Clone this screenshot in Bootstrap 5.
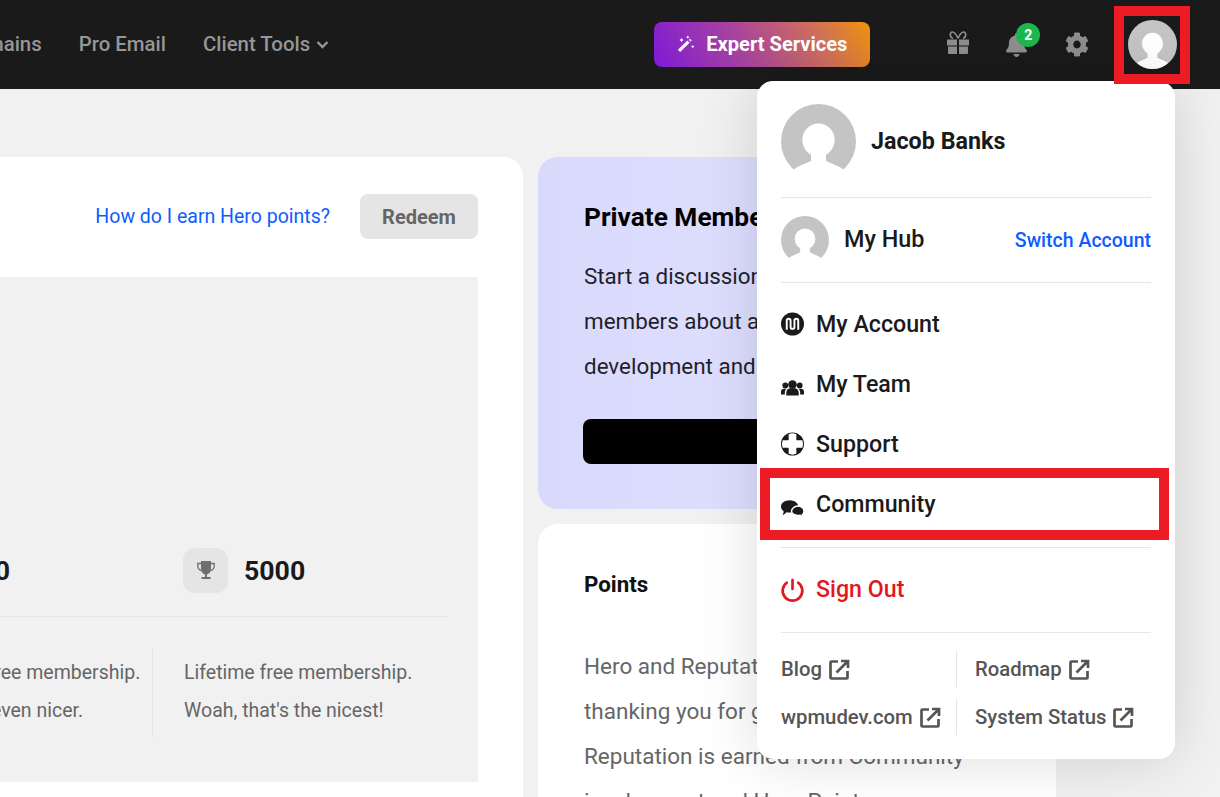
<!DOCTYPE html>
<html lang="en">
<head>
<meta charset="utf-8">
<title>Hub</title>
<link rel="stylesheet" href="https://cdn.jsdelivr.net/npm/bootstrap@5.3.0/dist/css/bootstrap.min.css">
<style>
html,body{height:100%;}
body{background:#f1f1f1;font-family:Roboto,"Liberation Sans",sans-serif;font-size:20px;color:#1a1a1a;overflow:hidden;}
.shell{position:relative;width:1220px;height:797px;overflow:hidden;}
.topbar{height:89px;background:#1a1a1a;padding:0;flex-wrap:nowrap;}
.topnav{margin-left:-39px;gap:37px;margin-bottom:1px;}
.topnav a{color:#969696;font-size:20.400px;font-weight:500;text-decoration:none;white-space:nowrap;padding:0;}
.topnav svg{width:13px;height:13px;margin-left:6px;vertical-align:0;}
.expert{width:216px;height:45px;margin-left:325px;border:0;border-radius:8px;color:#fff;font-size:20.100px;font-weight:700;background:linear-gradient(65deg,#7e1ad6 0%,#a9459b 42%,#cf6f5c 75%,#f0920d 100%);gap:11px;padding:0 0 1px 23px;}
.expert:hover{color:#fff;}
.expert svg{width:18px;height:18px;}
.ticon{fill:#8e8e8e;display:block;}
.gift{width:22px;height:23px;margin-left:77px;margin-bottom:4px;}
.bellbox{position:relative;width:21px;height:24px;margin-left:37px;}
.bellbox svg{width:21px;height:24px;}
.bellnum{position:absolute;left:10px;top:-10px;width:24px;height:24px;border-radius:50%;background:#1cb84f;color:#fff;font-size:14px;font-weight:700;padding:0;line-height:24px;}
.gear{width:24px;height:25px;margin-left:38px;margin-bottom:1px;}
.avtop{width:49px;height:49px;margin-left:39px;display:block;}
.stage{padding-top:68px;align-items:flex-start;}
.herocard{margin-left:-300px;width:823px;flex:none;height:800px;background:#fff;border-radius:20px;padding:37px 45px 0;}
.herohead{height:45px;margin-bottom:38px;gap:30px;}
.bluelink{color:#0d5cff;text-decoration:none;font-size:19.500px;}
.redeem{width:118px;height:45px;padding:0;border:0;border-radius:8px;background:#e5e5e5;color:#666;font-size:20px;font-weight:700;}
.greybox{height:505px;background:#f1f1f1;padding:271px 30px 0 114px;}
.statrow{height:69px;border-bottom:1px solid #e6e6e6;align-items:flex-start;}
.statcell{width:294px;gap:16px;align-items:flex-start;}
.statfirst{justify-content:flex-end;padding-right:143px;}
.statlast{padding-left:30px;}
.chip{width:45px;height:45px;border-radius:12px;background:#e5e5e5;}
.chip svg{width:18px;height:20px;fill:#6f6f6f;}
.statnum{font-size:26.700px;font-weight:700;color:#1a1a1a;line-height:47px;}
.descrow{margin-top:31px;}
.desc{width:294px;height:89px;padding-top:6px;font-size:19.500px;line-height:38px;color:#666;white-space:nowrap;}
.descfirst{border-right:1px solid #e6e6e6;padding-left:53px;}
.desclast{padding-left:31px;}
.rightcol{margin-left:15px;width:518px;flex:none;gap:15px;}
.forumcard{height:352px;border-radius:20px;background:linear-gradient(90deg,#d9d9fc,#e0e0ff 60%,#dcdcfd);padding:44px 46px 0;}
.forumcard h2{font-size:26.300px;font-weight:700;color:#000;line-height:32px;margin:0 0 21px;white-space:nowrap;}
.forumcard p{font-size:22.400px;line-height:45px;color:#1f1f2b;margin:0 0 30px;white-space:nowrap;}
.blackbtn{display:block;width:300px;height:45px;margin-left:-1px;background:#000;border:0;border-radius:8px;color:#000;}
.pointscard{height:320px;border-radius:20px;background:#fff;padding:45px 46px 0;}
.pointscard h3{font-size:22.300px;font-weight:700;color:#111;line-height:30px;margin:0 0 45px;}
.pointscard p{font-size:22.500px;line-height:45px;color:#666;margin:0;white-space:nowrap;}
.usermenu{position:absolute;left:757px;top:81px;width:418px;height:678px;margin:0;padding:0 24px;border:0;border-radius:16px;background:#fff;box-shadow:0 0 60px rgba(0,0,0,.14);font-size:22px;color:#1a1a1a;}
.whoami{height:116px;padding-top:23px;gap:15px;align-items:flex-start;}
.whoami svg{width:75px;height:75px;display:block;}
.whoami span{font-size:23.300px;font-weight:700;line-height:75px;}
.thinrule{margin:0;border:0;border-top:1px solid #e6e6e6;opacity:1;height:0;}
.hubline{height:84px;gap:15px;}
.hubline svg{width:48px;height:48px;}
.hubline .hubname{font-size:23.400px;font-weight:500;}
.hubline a{font-size:19.500px;font-weight:500;margin-left:auto;margin-top:1px;color:#0d5cff;text-decoration:none;}
.menulist{padding-top:11px;height:264px;}
.usermenu .dropdown-item{height:60px;padding:0;gap:12px;display:flex;align-items:center;font-size:23.200px;font-weight:500;color:#1a1a1a;background:none;}
.usermenu .dropdown-item svg{width:23px;height:24px;fill:#1a1a1a;flex:none;overflow:visible;}
.usermenu .signout{height:84px;padding-bottom:2px;color:#e3181f;}
.usermenu .signout svg{fill:none;stroke:#e3181f;stroke-width:2.800;stroke-linecap:round;}
.footlinks{padding-top:18px;row-gap:12px;flex-wrap:wrap;}
.footlinks a{height:36px;display:flex;align-items:center;gap:7px;font-size:20.300px;font-weight:500;color:#555;text-decoration:none;white-space:nowrap;}
.footlinks a:nth-child(odd){width:176px;border-right:1px solid #e6e6e6;}
.footlinks a:nth-child(even){padding-left:18px;width:194px;}
.footlinks svg{width:21px;height:21px;fill:none;stroke:#555;stroke-width:2.700;}
.redmark{position:absolute;z-index:1001;border:10px solid #ed1c24;pointer-events:none;}
.markavatar{left:1114px;top:6px;width:76px;height:78px;}
.markitem{left:760px;top:468px;width:409px;height:72px;}
</style>
</head>
<body>
<svg width="0" height="0" class="position-absolute">
<defs>
<clipPath id="avclip"><circle cx="50" cy="50" r="50"/></clipPath>
<mask id="avmask"><rect width="100" height="100" fill="#fff"/><path fill="#000" d="M40 76C34 80 22 82 14 90V101H86V90C78 82 66 80 60 76z"/></mask>
<symbol id="avatar" viewBox="0 0 100 100">
<circle cx="50" cy="50" r="50" fill="#c4c4c4" mask="url(#avmask)"/>
<g clip-path="url(#avclip)" fill="#fff">
<ellipse cx="50" cy="48" rx="21.500" ry="22"/>
<rect x="40" y="62" width="20" height="16"/>
<path d="M40 76C34 80 22 82 14 90V101H86V90C78 82 66 80 60 76z"/>
</g>
</symbol>
<symbol id="extlink" viewBox="0 0 21 21">
<path d="M9 2.500H2.500a1 1 0 0 0-1 1v15a1 1 0 0 0 1 1h15a1 1 0 0 0 1-1V12"/>
<path d="M7.500 13.500 18 3M12 2h7v7"/>
</symbol>
</defs>
</svg>
<div class="shell">
<nav class="navbar topbar d-flex align-items-center justify-content-start">
<div class="d-flex align-items-center topnav">
<a href="#">Domains</a>
<a href="#">Pro Email</a>
<a href="#">Client Tools<svg viewBox="0 0 13 13" fill="none" stroke="#969696" stroke-width="2.400"><path d="M1.500 4 6.500 9l5-5"/></svg></a>
</div>
<button class="btn expert d-flex align-items-center justify-content-start" type="button">
<svg viewBox="0 0 20 20" fill="#fff"><path d="M1 16.500 11.500 6l2.500 2.500L3.500 19z"/><path d="M13 5.500l1.500-1.500 2 2-1.500 1.500z" opacity=".8"/><path d="M5 3l.8 1.700 1.700.8-1.700.8L5 8l-.8-1.700-1.700-.8 1.700-.8zM12 .5l.6 1.300 1.300.6-1.300.6-.6 1.300-.6-1.300-1.300-.6 1.300-.6zM17.500 11l.6 1.300 1.300.6-1.300.6-.6 1.300-.6-1.300-1.300-.6 1.300-.6z"/></svg>
Expert Services</button>
<svg class="ticon gift" viewBox="0 0 22 23"><path d="M0 8.500h10v6H0zM12 8.500h10v6H12zM1 15.500h9V23H2a1 1 0 0 1-1-1zM12 15.500h9V22a1 1 0 0 1-1 1h-8z"/><path fill="none" stroke="#8e8e8e" stroke-width="1.700" d="M11 7.500C9 2.500 7 1 5.200 1 2.800 1 2.200 6.500 6 7.300M11 7.500c2-5 4-6.500 5.800-6.500 2.400 0 3 5.500-.8 6.300"/></svg>
<div class="bellbox">
<svg class="ticon" viewBox="0 0 448 512"><path d="M224 512c35.320 0 63.970-28.650 63.970-64H160.030c0 35.350 28.650 64 63.970 64zm215.390-149.710c-19.320-20.760-55.470-51.990-55.470-154.290 0-77.700-54.480-139.900-127.940-155.160V32c0-17.670-14.320-32-31.980-32s-31.980 14.330-31.980 32v20.840C118.560 68.100 64.080 130.300 64.080 208c0 102.300-36.150 133.530-55.470 154.290-6 6.450-8.660 14.160-8.610 21.710.11 16.400 12.980 32 32.100 32h383.800c19.120 0 32-15.600 32.100-32 .05-7.550-2.610-15.270-8.610-21.710z"/></svg>
<span class="badge bellnum">2</span>
</div>
<svg class="ticon gear" viewBox="0 0 512 512" preserveAspectRatio="none"><path d="M487.400 315.700l-42.600-24.600c4.300-23.200 4.300-47 0-70.200l42.600-24.600c4.900-2.800 7.100-8.600 5.500-14-11.100-35.600-30-67.800-54.700-94.600-3.800-4.100-10-5.100-14.800-2.300L380.800 110c-17.900-15.400-38.500-27.300-60.800-35.100V25.800c0-5.600-3.900-10.500-9.400-11.700-36.700-8.200-74.300-7.800-109.200 0-5.500 1.200-9.400 6.100-9.400 11.700V75c-22.200 7.900-42.800 19.800-60.800 35.100L88.700 85.500c-4.900-2.800-11-1.900-14.800 2.300-24.700 26.700-43.600 58.900-54.700 94.600-1.700 5.400.6 11.200 5.500 14L67.300 221c-4.300 23.200-4.300 47 0 70.200l-42.600 24.600c-4.900 2.800-7.100 8.600-5.500 14 11.100 35.600 30 67.800 54.700 94.600 3.800 4.100 10 5.100 14.800 2.300l42.600-24.600c17.900 15.400 38.500 27.300 60.800 35.100v49.200c0 5.600 3.900 10.500 9.400 11.700 36.700 8.200 74.300 7.800 109.200 0 5.500-1.200 9.400-6.100 9.400-11.700v-49.200c22.200-7.900 42.800-19.800 60.800-35.100l42.600 24.600c4.900 2.800 11 1.900 14.800-2.300 24.700-26.700 43.600-58.900 54.700-94.600 1.500-5.500-.7-11.300-5.600-14.100zM256 336c-44.100 0-80-35.900-80-80s35.900-80 80-80 80 35.900 80 80-35.900 80-80 80z"/></svg>
<svg class="avtop"><use href="#avatar"/></svg>
</nav>

<main class="d-flex stage">
<section class="herocard">
<div class="d-flex justify-content-end align-items-center herohead">
<a class="bluelink" href="#">How do I earn Hero points?</a>
<button class="btn redeem" type="button">Redeem</button>
</div>
<div class="greybox">
<div class="d-flex statrow">
<div class="d-flex statcell statfirst">
<span class="chip d-flex align-items-center justify-content-center"><svg viewBox="0 0 18 20"><path d="M4 0h10v8c0 3-2 5-4 5.500V16h3.500v2h-9v-2H8v-2.500C6 13 4 11 4 8z"/><path fill="none" stroke="#6f6f6f" stroke-width="1.300" d="M4 2.500H.8v2.500C.8 7.500 2.500 9 4.500 9.500M14 2.500h3.200v2.500c0 2.500-1.700 4-3.700 4.500"/></svg></span>
<span class="statnum">1000</span>
</div>
<div class="d-flex statcell statlast">
<span class="chip d-flex align-items-center justify-content-center"><svg viewBox="0 0 18 20"><path d="M4 0h10v8c0 3-2 5-4 5.500V16h3.500v2h-9v-2H8v-2.500C6 13 4 11 4 8z"/><path fill="none" stroke="#6f6f6f" stroke-width="1.300" d="M4 2.500H.8v2.500C.8 7.500 2.500 9 4.500 9.500M14 2.500h3.200v2.500c0 2.500-1.700 4-3.700 4.500"/></svg></span>
<span class="statnum">5000</span>
</div>
</div>
<div class="d-flex descrow">
<div class="desc descfirst">Lifetime free membership.<br>Wow, it's even nicer.</div>
<div class="desc desclast">Lifetime free membership.<br>Woah, that's the nicest!</div>
</div>
</div>
</section>
<div class="d-flex flex-column rightcol">
<section class="forumcard">
<h2>Private Members Forum</h2>
<p>Start a discussion with other<br>members about anything<br>development and more.</p>
<button class="blackbtn" type="button">Join</button>
</section>
<section class="pointscard">
<h3>Points</h3>
<p>Hero and Reputation points are our way of<br>thanking you for giving back to the community.<br>Reputation is earned from Community<br>involvement and Hero Points are</p>
</section>
</div>
</main>

<div class="dropdown-menu show usermenu">
<div class="d-flex whoami"><svg><use href="#avatar"/></svg><span>Jacob Banks</span></div>
<hr class="thinrule">
<div class="d-flex align-items-center hubline"><svg><use href="#avatar"/></svg><span class="hubname">My Hub</span><a href="#">Switch Account</a></div>
<hr class="thinrule">
<div class="menulist">
<a class="dropdown-item" href="#"><svg viewBox="0 0 24 24"><circle cx="12" cy="12" r="12"/><path d="M6 18V8.500a2 2 0 0 1 4 0V15a2 2 0 0 0 4 0V8.500a2 2 0 0 1 4 0V18" fill="none" stroke="#fff" stroke-width="2"/></svg>My Account</a>
<a class="dropdown-item" href="#"><svg viewBox="0 0 24 24"><g transform="translate(0 3)"><circle cx="12" cy="9.500" r="4.500"/><circle cx="4.500" cy="10.500" r="3"/><circle cx="19.500" cy="10.500" r="3"/><path d="M5.500 21v-3c0-3 2.500-4.500 4-4.500h5c1.500 0 4 1.500 4 4.500v3zM0 20v-3c0-2 1.500-3 3-3h2.800C4.600 15 4 16.500 4 18v2zM24 20v-3c0-2-1.500-3-3-3h-2.800c1.200 1 1.800 2.500 1.800 4v2z"/></g></svg>My Team</a>
<a class="dropdown-item" href="#"><svg viewBox="0 0 24 24"><circle cx="12" cy="12" r="12"/><path fill="#fff" d="M8 1.700a10.800 10.800 0 0 1 8 0V8h6.300a10.800 10.800 0 0 1 0 8H16v6.300a10.800 10.800 0 0 1-8 0V16H1.700a10.800 10.800 0 0 1 0-8H8z"/><rect x="7.500" y="7.500" width="9" height="9" rx="1.500" fill="#fff"/></svg>Support</a>
<a class="dropdown-item" href="#"><svg viewBox="0 0 24 24"><g transform="translate(0 8)"><path d="M9 0c5 0 9 3 9 6.500S14 13 9 13c-1.200 0-2.300-.2-3.300-.5C4.500 14 3 15 1.500 15.500c.8-1 1.300-2.500 1.300-4C1 10.300 0 8.500 0 6.500 0 3 4 0 9 0z"/><path d="M17.500 6c3.400 0 6.500 2.400 6.500 5.500 0 1.500-.7 2.800-1.800 3.700.1.700.4 1.300.8 1.800-1.200-.2-2.200-.7-3-1.300-.8.200-1.600.3-2.500.3-3.400 0-6.500-2.100-6.500-4.500S14 6 17.500 6z" stroke="#fff" stroke-width="1.500"/></g></svg>Community</a>
</div>
<hr class="thinrule">
<a class="dropdown-item signout" href="#"><svg viewBox="0 0 24 24"><path d="M12 2.500V12"/><path d="M6 5.500a10.300 10.300 0 1 0 12 0"/></svg>Sign Out</a>
<hr class="thinrule">
<div class="d-flex footlinks">
<a href="#">Blog <svg><use href="#extlink"/></svg></a>
<a href="#">Roadmap <svg><use href="#extlink"/></svg></a>
<a href="#">wpmudev.com <svg><use href="#extlink"/></svg></a>
<a href="#">System Status <svg><use href="#extlink"/></svg></a>
</div>
</div>

<div class="redmark markavatar"></div>
<div class="redmark markitem"></div>
</div>
<script src="https://cdn.jsdelivr.net/npm/bootstrap@5.3.0/dist/js/bootstrap.bundle.min.js"></script>
</body>
</html>
